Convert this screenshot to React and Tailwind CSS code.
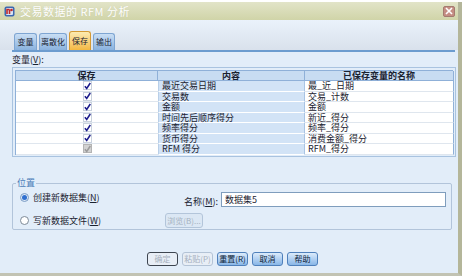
import React from "react";

const rows = [
  ["最近交易日期", "最_近_日期"],
  ["交易数", "交易_计数"],
  ["金额", "金额"],
  ["时间先后顺序得分", "新近_得分"],
  ["频率得分", "频率_得分"],
  ["货币得分", "消费金额_得分"],
  ["RFM 得分", "RFM_得分"],
];

function Check({ disabled }) {
  return (
    <span
      className={
        disabled
          ? "flex h-[9px] w-[9px] items-center justify-center border border-[#b4b4b4] bg-[#d2d2d2]"
          : "flex h-[9px] w-[9px] items-center justify-center border border-[#c9d1dd] bg-white"
      }
    >
      <svg width="8" height="8" viewBox="0 0 8 8">
        <path
          d="M1 4.3 L3.1 6.8 L7.2 0.6"
          fill="none"
          stroke={disabled ? "#9c9c9c" : "#1d1d8c"}
          strokeWidth="1.8"
        />
      </svg>
    </span>
  );
}

function Radio({ on }) {
  return on ? (
    <span className="flex h-[9px] w-[9px] items-center justify-center rounded-full border border-[#7c9cc4] bg-[#dbe8f7]">
      <span className="h-[5px] w-[5px] rounded-full bg-[#2f6fcf]" />
    </span>
  ) : (
    <span className="h-[9px] w-[9px] rounded-full border border-[#7d8a98] bg-white" />
  );
}

function Btn({ children, kind }) {
  if (kind === "on")
    return (
      <div className="flex h-[14px] w-[31px] items-center justify-center rounded-[3px] border border-[#4f80bb] bg-linear-to-b from-[#dcebfb] to-[#88b6e7] text-[8px] leading-none text-[#0f1f3a]">
        {children}
      </div>
    );
  if (kind === "def")
    return (
      <div className="flex h-[14px] w-[31px] items-center justify-center rounded-[3px] border border-[#3d4550] bg-[#e8eef6] text-[8px] leading-none text-[#a6b0bd]">
        {children}
      </div>
    );
  return (
    <div className="flex h-[14px] w-[31px] items-center justify-center rounded-[3px] border border-[#b3c3d6] bg-[#e8eef6] text-[8px] leading-none text-[#a6b0bd]">
      {children}
    </div>
  );
}

export default function App() {
  return (
    <div className="h-[279px] w-[467px] overflow-hidden bg-white pt-[2px] font-['Noto_Sans_CJK_SC',sans-serif] text-[9px] leading-none text-[#1a2230]">
      <div className="flex h-[274px] w-[462px] flex-col border-r-[4px] border-b-[3px] border-r-[#b4b69a] border-b-[#c2c3b3]">
        {/* title bar */}
        <div className="flex h-[18px] shrink-0 items-center bg-linear-to-b from-[#e2e4c8] to-[#d0d4a8] pl-[4px] pr-[3px]">
          <svg width="11" height="11" viewBox="0 0 11 11">
            <rect x="0.5" y="0.5" width="10" height="10" rx="2" fill="#3e69b0" />
            <rect x="2" y="2" width="7" height="7" rx="1" fill="#d8e4f4" />
            <path d="M3 8 L3 3.5 L5.5 3.5 M5.5 3.5 L5.5 8" stroke="#c0282a" strokeWidth="1.6" fill="none" />
            <circle cx="7.5" cy="4" r="1.3" fill="#c0282a" />
          </svg>
          <span className="ml-[5px] text-[11px] tracking-[0.5px] text-white [text-shadow:0_0_1px_#c2c5a2]">
            交易数据的 RFM 分析
          </span>
          <div className="ml-auto flex h-[11px] w-[12px] items-center justify-center rounded-[2px] border border-[#a47a70] bg-[#c58d83]">
            <svg width="8" height="8" viewBox="0 0 8 8">
              <path d="M1 1 L7 7 M7 1 L1 7" stroke="#fff" strokeWidth="1.6" />
            </svg>
          </div>
        </div>

        {/* body */}
        <div className="flex flex-1 flex-col bg-[#e2edf9]">
          {/* tabs */}
          <div className="flex h-[30px] items-end gap-[2px] bg-linear-to-b from-[#eaf2fb] to-[#d9e1ec] pl-[14px]">
            <div className="flex h-[17px] w-[23px] items-center justify-center rounded-t-[3px] border border-b-0 border-[#7ea5d2] bg-linear-to-b from-[#c9def4] to-[#8ab2de] text-[8px]">
              变量
            </div>
            <div className="flex h-[17px] w-[28px] items-center justify-center rounded-t-[3px] border border-b-0 border-[#7ea5d2] bg-linear-to-b from-[#c9def4] to-[#8ab2de] text-[8px]">
              离散化
            </div>
            <div className="flex h-[19px] w-[22px] items-center justify-center rounded-t-[3px] border border-b-0 border-[#d49a35] bg-linear-to-b from-[#fdebb0] to-[#f3b840] text-[8px]">
              保存
            </div>
            <div className="flex h-[17px] w-[22px] items-center justify-center rounded-t-[3px] border border-b-0 border-[#7ea5d2] bg-linear-to-b from-[#c9def4] to-[#8ab2de] text-[8px]">
              输出
            </div>
          </div>
          <div className="ml-[12px] mr-[3px] h-[2px] bg-[#6c9ccf]" />

          <div className="ml-[12px] mt-[3px] h-[10px] leading-[10px]">变量(<span className="underline">V</span>):</div>

          {/* table */}
          <div className="ml-[12px] mt-[2px] h-[90px] w-[444px] border border-[#a9c3e0] p-[2px]">
            <div className="grid grid-cols-[142px_147px_149px] border-l border-t border-[#8fb0d8]">
              <div className="flex h-[10px] items-center justify-center border-b border-r border-[#8fb0d8] bg-[#c8dcf2] font-bold">保存</div>
              <div className="flex h-[10px] items-center justify-center border-b border-r border-[#8fb0d8] bg-[#c8dcf2] font-bold">内容</div>
              <div className="flex h-[10px] items-center justify-center border-b border-r border-[#8fb0d8] bg-[#c8dcf2] font-bold">已保存变量的名称</div>
              {rows.map(([a, b], i) => (
                <React.Fragment key={i}>
                  <div className="flex h-[10.5px] items-center justify-center border-b border-[#dfe6ee] bg-white">
                    <Check disabled={i === 6} />
                  </div>
                  <div className="flex h-[10.5px] items-center border-b border-l border-r border-b-white border-l-[#b9cfe8] border-r-[#a9c4e4] bg-[#d2e3f6] pl-[3px]">
                    {a}
                  </div>
                  <div className="flex h-[10.5px] items-center border-b border-r border-[#dfe6ee] border-r-[#8fb0d8] bg-white pl-[3px]">
                    {b}
                  </div>
                </React.Fragment>
              ))}
            </div>
          </div>

          {/* location group */}
          <div className="relative ml-[12px] mt-[26px] flex h-[47px] w-[440px] flex-col rounded-[2px] border border-[#b2c4da] pl-[7px] pr-[5px] pt-[8px]">
            <span className="absolute -top-[6px] left-[3px] bg-[#e2edf9] px-[1px] leading-[10px] text-[#4a7cb8]">位置</span>
            <div className="flex h-[15px] items-center">
              <div className="flex items-center gap-[4px] self-start pt-[1px]">
                <Radio on />
                <span>创建新数据集(<span className="underline">N</span>)</span>
              </div>
              <div className="ml-auto flex items-center gap-[3px]">
                <span className="pt-[3px]">名称(<span className="underline">M</span>):</span>
                <div className="flex h-[15px] w-[225px] items-center border border-[#7f9dbd] bg-white pl-[3px]">数据集5</div>
              </div>
            </div>
            <div className="mt-[6px] flex h-[15px] items-center">
              <div className="flex w-[145px] items-center gap-[4px]">
                <Radio />
                <span>写新数据文件(<span className="underline">W</span>)</span>
              </div>
              <div className="flex h-[15px] w-[38px] items-center justify-center rounded-[3px] border border-[#b3c5da] bg-[#dbe7f4] text-[8px] text-[#a6b2c0]">
                浏览(B)...
              </div>
            </div>
          </div>

          {/* buttons */}
          <div className="ml-[147px] mt-[22px] flex gap-[4px]">
            <Btn kind="def">确定</Btn>
            <Btn>粘贴(P)</Btn>
            <Btn kind="on">重置(R)</Btn>
            <Btn kind="on">取消</Btn>
            <Btn kind="on">帮助</Btn>
          </div>
        </div>
      </div>
    </div>
  );
}
